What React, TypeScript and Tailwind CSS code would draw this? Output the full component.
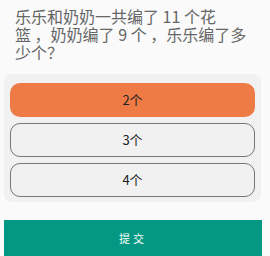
const options = ['2个', '3个', '4个'];

export default function App() {
  const selected = 0;
  return (
    <div
      className="h-[256px] w-[270px] overflow-hidden bg-[#fafafa]"
      style={{ fontFamily: '"Noto Sans CJK SC", Roboto, sans-serif' }}
    >
      <p className="w-[250px] pl-[15px] pt-[7px] text-[16px] leading-[18px] text-[#666]">
        乐乐和奶奶一共编了 11 个花<span className="whitespace-nowrap">篮 ，</span>奶奶编了 9{' '}
        <span className="whitespace-nowrap">个 ，</span>乐乐编了多少个？
      </p>

      <div className="ml-[4px] mt-[13px] flex w-[257px] flex-col gap-[6px] rounded-[8px] bg-[#f1f1f1] px-[6px] pb-[5px] pt-[9px]">
        {options.map((o, i) => (
          <div
            key={o}
            className={
              i === selected
                ? 'flex h-[34px] items-center justify-center rounded-[10px] bg-[#ee7a45] text-[13px] text-[#222]'
                : 'flex h-[34px] items-center justify-center rounded-[10px] border border-[#777] text-[13px] text-[#222]'
            }
          >
            {o}
          </div>
        ))}
      </div>

      <div className="ml-[4px] mt-[18px] flex h-[36px] w-[258px] items-center justify-center bg-[#049782] text-[11px] tracking-[3px] text-white">
        提交
      </div>
    </div>
  );
}
